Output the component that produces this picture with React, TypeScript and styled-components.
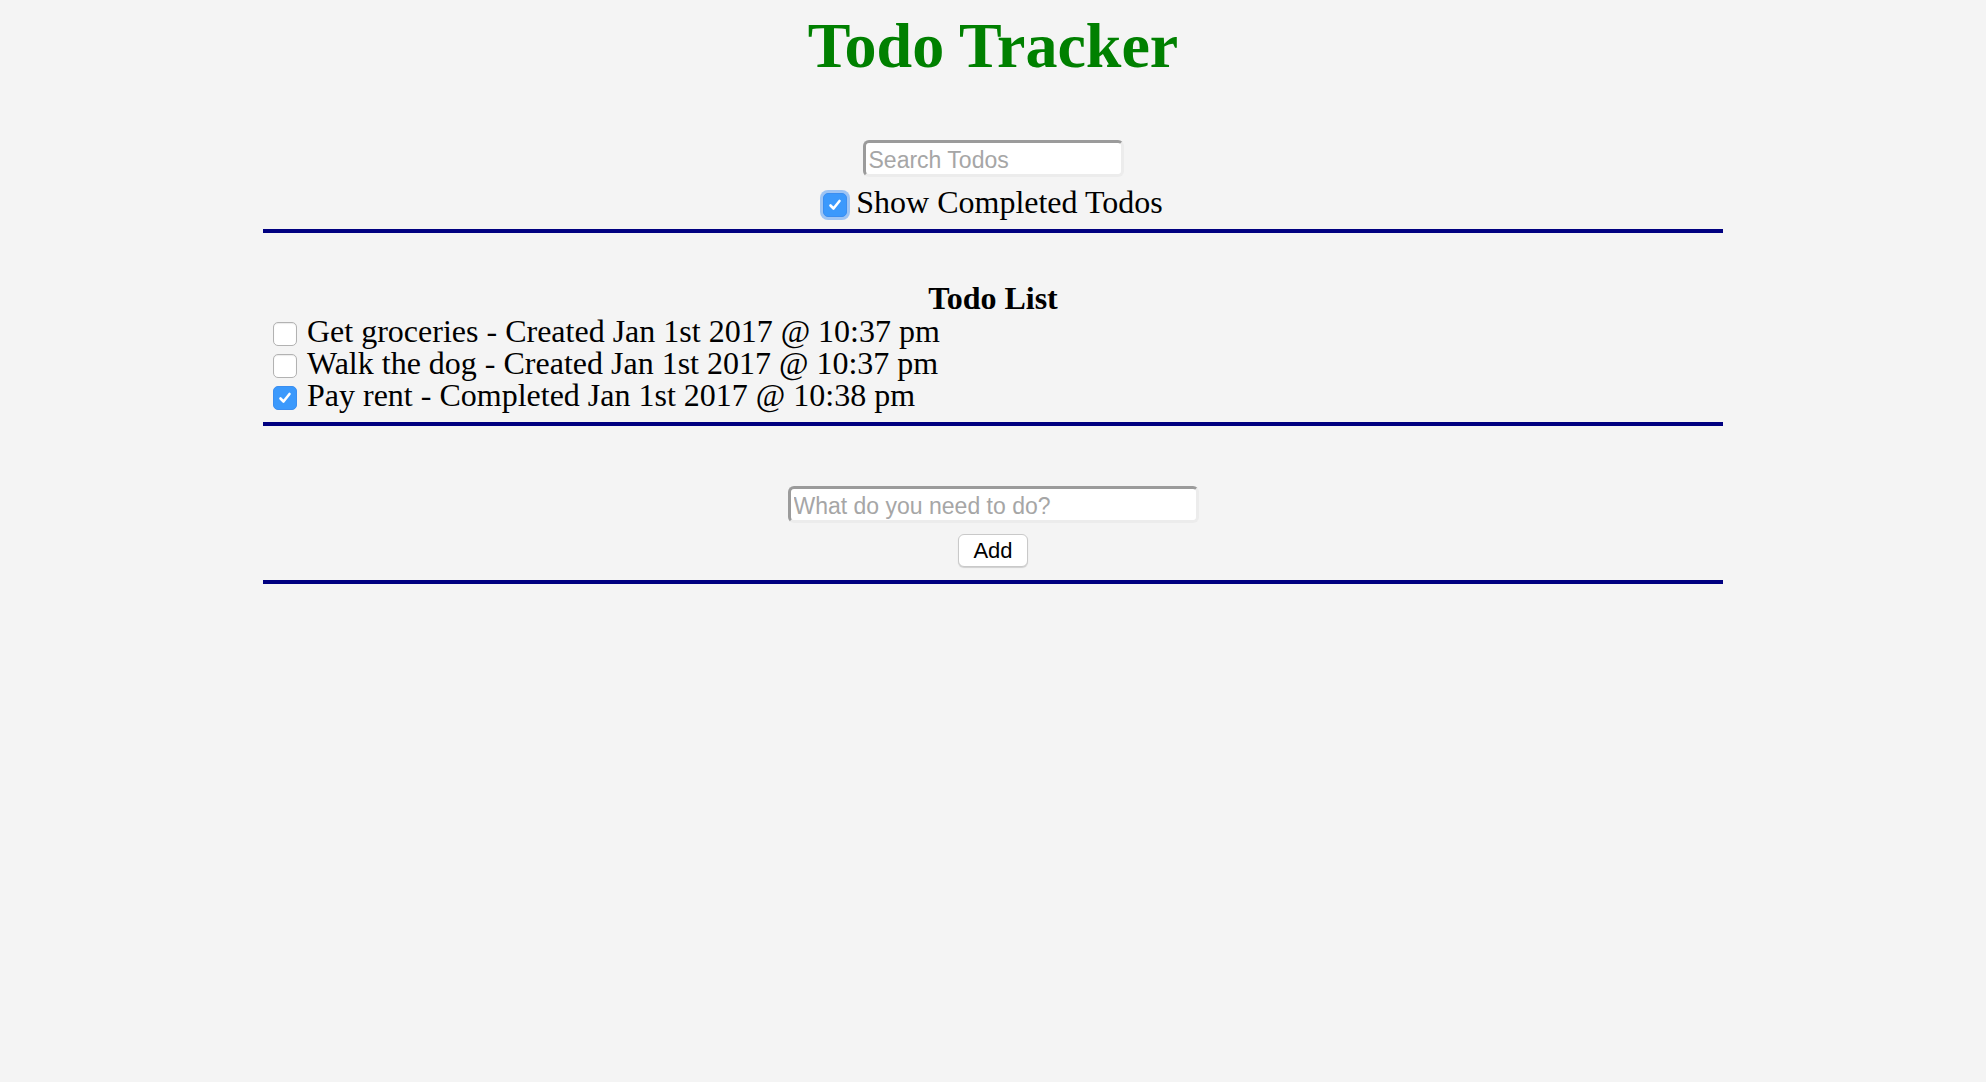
import React, { useState } from "react";
import styled, { createGlobalStyle } from "styled-components";

const GlobalStyle = createGlobalStyle`
  html, body {
    margin: 0;
    padding: 0;
    background: #f4f4f4;
  }
  body {
    font-family: "Liberation Serif", "Times New Roman", serif;
    color: #000;
  }
`;

const Page = styled.div`
  width: 1460px;
  margin: 0 auto;
  display: flex;
  flex-direction: column;
`;

const Title = styled.h1`
  margin: 0;
  font-size: 64px;
  line-height: 91px;
  font-weight: bold;
  color: #008000;
  text-align: center;
`;

const Section = styled.section<{ $top: number; $bottom: number }>`
  display: flex;
  flex-direction: column;
  align-items: center;
  padding-top: ${(p) => p.$top}px;
  padding-bottom: ${(p) => p.$bottom}px;
  border-bottom: 4px solid #000080;
`;

const TextInput = styled.input<{ $width: number }>`
  box-sizing: border-box;
  width: ${(p) => p.$width}px;
  height: 37px;
  margin: 0;
  padding: 3px 3px 0;
  background: #fff;
  border-style: solid;
  border-width: 3px;
  border-color: #9b9b9b #ececec #ececec #9b9b9b;
  border-radius: 6px;
  font-family: "Liberation Sans", Arial, Helvetica, sans-serif;
  font-size: 23px;
  color: #000;
  outline: none;
  &::placeholder {
    color: #a6a6a6;
  }
`;

const ToggleRow = styled.label`
  display: flex;
  align-items: flex-start;
  gap: 9px;
  margin-top: 9px;
  font-size: 32px;
  line-height: 32px;
  cursor: pointer;
`;

const Box = styled.span<{ $checked: boolean; $focus?: boolean }>`
  box-sizing: border-box;
  flex: none;
  margin-top: 7px;
  width: 24px;
  height: 24px;
  border-radius: 5px;
  display: flex;
  align-items: center;
  justify-content: center;
  background: ${(p) => (p.$checked ? "#3b99fc" : "#fff")};
  border: ${(p) => (p.$checked ? "1px solid #3b8ef0" : "1px solid #b2b2b2")};
  box-shadow: ${(p) =>
    p.$focus
      ? "0 0 0 3px rgba(110, 170, 245, 0.65)"
      : p.$checked
      ? "none"
      : "inset 0 1px 1px rgba(0,0,0,0.08)"};
  svg {
    display: block;
  }
`;

const HiddenInput = styled.input`
  position: absolute;
  opacity: 0;
  width: 0;
  height: 0;
  margin: 0;
`;

const ListHeading = styled.h2`
  margin: 0;
  font-size: 32px;
  line-height: 34px;
  font-weight: bold;
  text-align: center;
  align-self: stretch;
`;

const TodoList = styled.div`
  align-self: stretch;
  display: flex;
  flex-direction: column;
`;

const TodoRow = styled.label`
  display: flex;
  align-items: flex-start;
  gap: 10px;
  padding-left: 10px;
  height: 32px;
  font-size: 32px;
  line-height: 32px;
  cursor: pointer;
`;

const AddButton = styled.button`
  box-sizing: border-box;
  margin-top: 11px;
  width: 70px;
  height: 33px;
  padding: 0;
  background: #fff;
  border: 1px solid #c9c9c9;
  border-radius: 6px;
  box-shadow: 0 1px 1px rgba(0, 0, 0, 0.15);
  font-family: "Liberation Sans", Arial, Helvetica, sans-serif;
  font-size: 22px;
  color: #000;
`;

const Check = () => (
  <svg width="16" height="16" viewBox="0 0 16 16">
    <polyline
      points="3.5,8.5 6.5,11.5 12.5,4"
      fill="none"
      stroke="#fff"
      strokeWidth="2.6"
      strokeLinecap="round"
      strokeLinejoin="round"
    />
  </svg>
);

type CheckboxProps = {
  checked: boolean;
  focus?: boolean;
  onChange: () => void;
};

const Checkbox = ({ checked, focus, onChange }: CheckboxProps) => (
  <>
    <HiddenInput type="checkbox" checked={checked} onChange={onChange} />
    <Box $checked={checked} $focus={focus}>
      {checked && <Check />}
    </Box>
  </>
);

type Todo = { id: number; text: string; completed: boolean; stamp: string };

export default function App() {
  const [showCompleted, setShowCompleted] = useState(true);
  const [todos, setTodos] = useState<Todo[]>([
    { id: 1, text: "Get groceries", completed: false, stamp: "Created Jan 1st 2017 @ 10:37 pm" },
    { id: 2, text: "Walk the dog", completed: false, stamp: "Created Jan 1st 2017 @ 10:37 pm" },
    { id: 3, text: "Pay rent", completed: true, stamp: "Completed Jan 1st 2017 @ 10:38 pm" },
  ]);

  const toggle = (id: number) =>
    setTodos((ts) => ts.map((t) => (t.id === id ? { ...t, completed: !t.completed } : t)));

  const visible = todos.filter((t) => showCompleted || !t.completed);

  return (
    <>
      <GlobalStyle />
      <Page>
        <Title>Todo Tracker</Title>
        <Section $top={49} $bottom={11}>
          <TextInput $width={261} type="text" placeholder="Search Todos" />
          <ToggleRow>
            <Checkbox
              checked={showCompleted}
              focus
              onChange={() => setShowCompleted((s) => !s)}
            />
            Show Completed Todos
          </ToggleRow>
        </Section>
        <Section $top={48} $bottom={11}>
          <ListHeading>Todo List</ListHeading>
          <TodoList>
            {visible.map((t) => (
              <TodoRow key={t.id}>
                <Checkbox checked={t.completed} onChange={() => toggle(t.id)} />
                {`${t.text} - ${t.stamp}`}
              </TodoRow>
            ))}
          </TodoList>
        </Section>
        <Section $top={60} $bottom={13}>
          <TextInput $width={411} type="text" placeholder="What do you need to do?" />
          <AddButton type="button">Add</AddButton>
        </Section>
      </Page>
    </>
  );
}
